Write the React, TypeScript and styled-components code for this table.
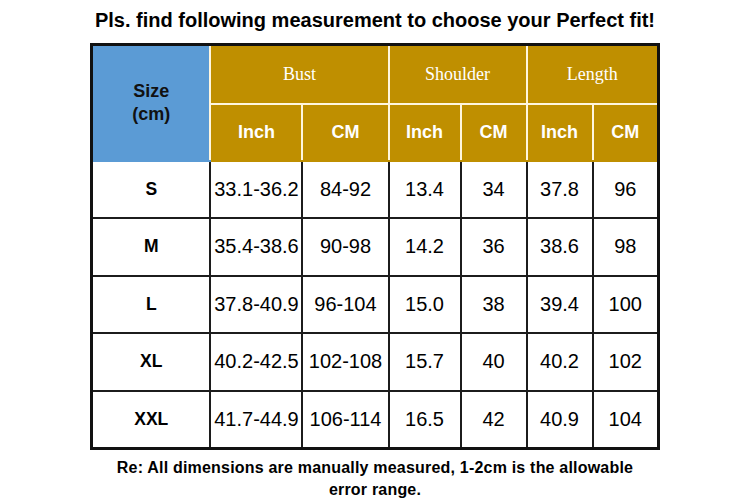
import * as React from 'react';
import styled, { createGlobalStyle } from "styled-components";

const GlobalStyle = createGlobalStyle`
    html, body {
        margin: 0;
        padding: 0;
        background: #fff;
    }
    body {
        font-family: "Liberation Sans", Arial, sans-serif;
        color: #000;
    }
`

const Page = styled.div`
    width: 750px;
    height: 500px;
    display: flex;
    flex-direction: column;
    align-items: center;
    overflow: hidden;
`

const Title = styled.h1`
    margin: 8px 0 0 0;
    height: 28px;
    font-size: 20px;
    font-weight: 700;
    line-height: 24px;
    letter-spacing: 0;
`

const SizeTable = styled.table`
    margin-top: 11px;
    width: 567px;
    border-collapse: collapse;
    border: 3px solid #111;
    table-layout: fixed;
`

const HeadCell = styled.th<{ $tone: 'blue' | 'gold', $serif?: boolean, $low?: boolean }>`
    background: ${p => p.$tone === 'blue' ? '#5b9bd5' : '#bf8f00'};
    color: ${p => p.$tone === 'blue' ? '#111' : '#fff'};
    border: 2px solid #fff6df;
    border-bottom-color: ${p => p.$low ? (p.$tone === 'blue' ? '#5b9bd5' : '#bf8f00') : '#fff6df'};
    font-family: ${p => p.$serif ? '"Liberation Serif", "DejaVu Serif", serif' : '"Liberation Sans", Arial, sans-serif'};
    font-weight: ${p => p.$serif ? 400 : 700};
    font-size: 18px;
    line-height: 23px;
    text-align: center;
    padding: 0;
`

const HeadRow = styled.tr<{ $h: number }>`
    height: ${p => p.$h}px;
`

const DataRow = styled.tr`
    height: 57.5px;
`

const DataCell = styled.td<{ $bold?: boolean }>`
    border: 2px solid #1c1c1c;
    text-align: center;
    padding: 0;
    font-size: ${p => p.$bold ? '17.5px' : '20px'};
    font-weight: ${p => p.$bold ? 700 : 400};
    white-space: nowrap;
    overflow: visible;
`

const Note = styled.p`
    margin: 7px 0 0 0;
    width: 540px;
    text-align: center;
    font-size: 16px;
    font-weight: 700;
    line-height: 22px;
    letter-spacing: 0.2px;
`

const rows = [
    ['S', '33.1-36.2', '84-92', '13.4', '34', '37.8', '96'],
    ['M', '35.4-38.6', '90-98', '14.2', '36', '38.6', '98'],
    ['L', '37.8-40.9', '96-104', '15.0', '38', '39.4', '100'],
    ['XL', '40.2-42.5', '102-108', '15.7', '40', '40.2', '102'],
    ['XXL', '41.7-44.9', '106-114', '16.5', '42', '40.9', '104'],
]

const widths = [119, 92, 86, 72, 66, 66, 66]

function App() {
    return (
        <Page>
            <GlobalStyle />
            <Title>Pls. find following measurement to choose your Perfect fit!</Title>
            <SizeTable>
                <colgroup>
                    {widths.map((w, i) => <col key={i} style={{ width: w }} />)}
                </colgroup>
                <thead>
                    <HeadRow $h={59}>
                        <HeadCell $tone="blue" $low rowSpan={2}>Size<br />(cm)</HeadCell>
                        <HeadCell $tone="gold" $serif colSpan={2}>Bust</HeadCell>
                        <HeadCell $tone="gold" $serif colSpan={2}>Shoulder</HeadCell>
                        <HeadCell $tone="gold" $serif colSpan={2}>Length</HeadCell>
                    </HeadRow>
                    <HeadRow $h={57}>
                        {['Inch', 'CM', 'Inch', 'CM', 'Inch', 'CM'].map((t, i) => (
                            <HeadCell key={i} $tone="gold" $low>{t}</HeadCell>
                        ))}
                    </HeadRow>
                </thead>
                <tbody>
                    {rows.map(r => (
                        <DataRow key={r[0]}>
                            {r.map((c, i) => <DataCell key={i} $bold={i === 0}>{c}</DataCell>)}
                        </DataRow>
                    ))}
                </tbody>
            </SizeTable>
            <Note>Re: All dimensions are manually measured, 1-2cm is the allowable error range.</Note>
        </Page>
    )
}

export default App
